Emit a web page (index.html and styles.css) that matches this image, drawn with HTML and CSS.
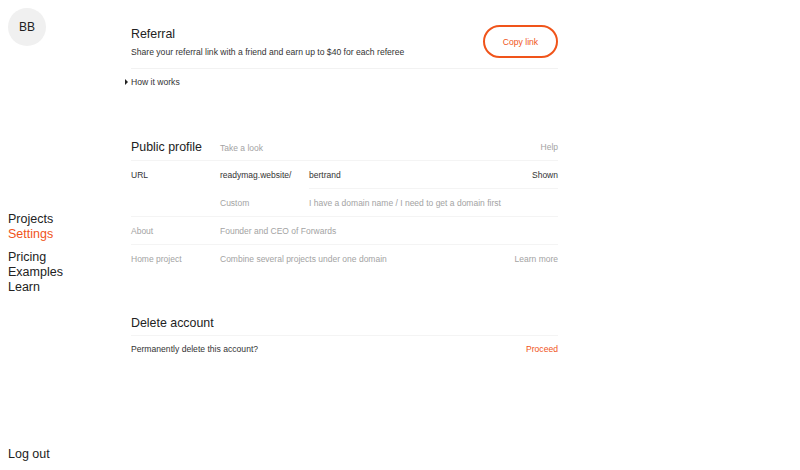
FILE: index.html
```html
<!DOCTYPE html>
<html>
<head>
<meta charset="utf-8">
<link rel="stylesheet" href="styles.css">
</head>
<body>
<div class="page">
  <aside class="sidebar">
    <div class="avatar">BB</div>
    <nav class="nav">
      <div class="nav-group">
        <a class="nav-item">Projects</a>
        <a class="nav-item active">Settings</a>
      </div>
      <div class="nav-group">
        <a class="nav-item">Pricing</a>
        <a class="nav-item">Examples</a>
        <a class="nav-item">Learn</a>
      </div>
    </nav>
    <a class="nav-item logout">Log out</a>
  </aside>
  <main class="main">
    <section class="referral">
      <div class="referral-head">
        <div>
          <h2 class="title">Referral</h2>
          <p class="sub">Share your referral link with a friend and earn up to $40 for each referee</p>
        </div>
        <button class="copy">Copy link</button>
      </div>
      <div class="how"><span class="tri"></span>How it works</div>
    </section>

    <section class="profile">
      <div class="profile-head">
        <h2 class="title c1">Public profile</h2>
        <span class="muted look">Take a look</span>
        <span class="muted right">Help</span>
      </div>
      <div class="row split">
        <span class="c1">URL</span>
        <span class="c2">readymag.website/</span>
        <span class="c3">bertrand<span class="right">Shown</span></span>
      </div>
      <div class="row">
        <span class="c1"></span>
        <span class="c2 muted">Custom</span>
        <span class="c3 muted">I have a domain name / I need to get a domain first</span>
      </div>
      <div class="row">
        <span class="c1 muted">About</span>
        <span class="muted">Founder and CEO of Forwards</span>
      </div>
      <div class="row last">
        <span class="c1 muted">Home project</span>
        <span class="muted">Combine several projects under one domain</span>
        <span class="right muted">Learn more</span>
      </div>
    </section>

    <section class="delete">
      <h2 class="title del-title">Delete account</h2>
      <div class="del-row">
        <span>Permanently delete this account?</span>
        <span class="right orange">Proceed</span>
      </div>
    </section>
  </main>
</div>
</body>
</html>
```
FILE: styles.css
```css
* { box-sizing: border-box; }
html, body { margin: 0; padding: 0; background: #fff; }
body {
  font-family: "Liberation Sans", Arial, Helvetica, sans-serif;
  color: #222;
  width: 800px;
  height: 470px;
  overflow: hidden;
}
.page {
  display: flex;
  height: 470px;
}
.sidebar {
  width: 131px;
  flex: none;
  display: flex;
  flex-direction: column;
  padding: 8px 0 0 8px;
}
.avatar {
  width: 38px;
  height: 38px;
  border-radius: 50%;
  background: #f0f0f0;
  display: flex;
  align-items: center;
  justify-content: center;
  font-size: 12px;
  color: #222;
}
.nav {
  margin-top: 166px;
  display: flex;
  flex-direction: column;
  gap: 8px;
}
.nav-group { display: flex; flex-direction: column; }
.nav-item {
  font-size: 12.5px;
  line-height: 15px;
  color: #222;
}
.nav-item.active { color: #f0541a; }
.logout { margin-top: auto; margin-bottom: 8px; }

.main {
  width: 427px;
  flex: none;
  display: flex;
  flex-direction: column;
}
.title {
  margin: 0;
  font-size: 12.4px;
  font-weight: 400;
  color: #222;
  line-height: 16px;
  white-space: nowrap;
}
.referral-head {
  display: flex;
  justify-content: space-between;
  align-items: center;
  padding-top: 25px;
  padding-bottom: 10px;
  border-bottom: 1px solid #f2f2f2;
}
.sub {
  margin: 4px 0 0;
  font-size: 8.6px;
  line-height: 12px;
  color: #333;
  white-space: nowrap;
}
.copy {
  width: 75px;
  height: 33px;
  border: 2px solid #f0541a;
  border-radius: 17px;
  background: #fff;
  color: #f0541a;
  font-family: inherit;
  font-size: 8.6px;
  padding: 0;
}
.how {
  position: relative;
  font-size: 8.6px;
  line-height: 12px;
  margin-top: 7px;
  color: #333;
}
.tri {
  position: absolute;
  left: -6px;
  top: 3px;
  width: 0;
  height: 0;
  border-top: 3px solid transparent;
  border-bottom: 3px solid transparent;
  border-left: 3.5px solid #222;
}

.profile { margin-top: 45px; }
.profile-head {
  display: flex;
  align-items: center;
  height: 28px;
  border-bottom: 1px solid #f4f4f4;
  font-size: 8.5px;
}
.look { padding-top: 2px; }
.muted { color: #a3a3a3; }
.right { margin-left: auto; }
.row {
  display: flex;
  align-items: center;
  height: 28px;
  font-size: 8.5px;
  border-bottom: 1px solid #f4f4f4;
  color: #333;
  white-space: nowrap;
}
.row.split { border-bottom: none; }
.row.split .c3 {
  align-self: stretch;
  display: flex;
  align-items: center;
  border-bottom: 1px solid #f4f4f4;
}
.c1 { width: 89px; flex: none; }
.c2 { width: 89px; flex: none; }
.c3 { flex: 1; }
.row.last { border-bottom: none; }

.delete { margin-top: 42px; }
.del-title {
  padding-bottom: 4px;
  border-bottom: 1px solid #f4f4f4;
}
.del-row {
  display: flex;
  align-items: center;
  height: 26px;
  font-size: 8.6px;
  color: #333;
}
.orange { color: #f0541a; }
```
